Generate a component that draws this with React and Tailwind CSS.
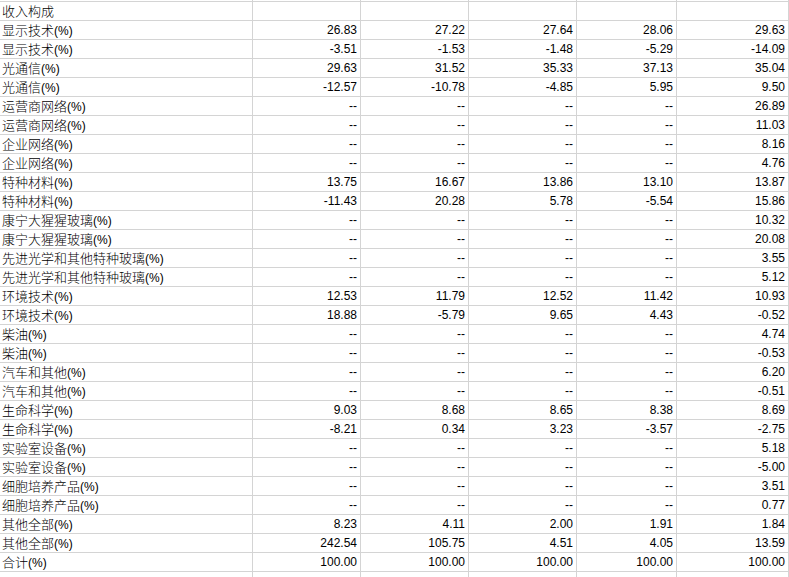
const rows = [
  ["收入构成", false, ["", "", "", "", ""]],
  ["显示技术", true, ["26.83", "27.22", "27.64", "28.06", "29.63"]],
  ["显示技术", true, ["-3.51", "-1.53", "-1.48", "-5.29", "-14.09"]],
  ["光通信", true, ["29.63", "31.52", "35.33", "37.13", "35.04"]],
  ["光通信", true, ["-12.57", "-10.78", "-4.85", "5.95", "9.50"]],
  ["运营商网络", true, ["--", "--", "--", "--", "26.89"]],
  ["运营商网络", true, ["--", "--", "--", "--", "11.03"]],
  ["企业网络", true, ["--", "--", "--", "--", "8.16"]],
  ["企业网络", true, ["--", "--", "--", "--", "4.76"]],
  ["特种材料", true, ["13.75", "16.67", "13.86", "13.10", "13.87"]],
  ["特种材料", true, ["-11.43", "20.28", "5.78", "-5.54", "15.86"]],
  ["康宁大猩猩玻璃", true, ["--", "--", "--", "--", "10.32"]],
  ["康宁大猩猩玻璃", true, ["--", "--", "--", "--", "20.08"]],
  ["先进光学和其他特种玻璃", true, ["--", "--", "--", "--", "3.55"]],
  ["先进光学和其他特种玻璃", true, ["--", "--", "--", "--", "5.12"]],
  ["环境技术", true, ["12.53", "11.79", "12.52", "11.42", "10.93"]],
  ["环境技术", true, ["18.88", "-5.79", "9.65", "4.43", "-0.52"]],
  ["柴油", true, ["--", "--", "--", "--", "4.74"]],
  ["柴油", true, ["--", "--", "--", "--", "-0.53"]],
  ["汽车和其他", true, ["--", "--", "--", "--", "6.20"]],
  ["汽车和其他", true, ["--", "--", "--", "--", "-0.51"]],
  ["生命科学", true, ["9.03", "8.68", "8.65", "8.38", "8.69"]],
  ["生命科学", true, ["-8.21", "0.34", "3.23", "-3.57", "-2.75"]],
  ["实验室设备", true, ["--", "--", "--", "--", "5.18"]],
  ["实验室设备", true, ["--", "--", "--", "--", "-5.00"]],
  ["细胞培养产品", true, ["--", "--", "--", "--", "3.51"]],
  ["细胞培养产品", true, ["--", "--", "--", "--", "0.77"]],
  ["其他全部", true, ["8.23", "4.11", "2.00", "1.91", "1.84"]],
  ["其他全部", true, ["242.54", "105.75", "4.51", "4.05", "13.59"]],
  ["合计", true, ["100.00", "100.00", "100.00", "100.00", "100.00"]],
];

const grid = "grid grid-cols-[253px_108px_108px_108px_100px_1fr]";
const latin = "font-['Liberation_Sans',Arial,sans-serif] text-[12px]";
const cjk = "font-['Noto_Sans_CJK_SC',sans-serif] text-[13px] font-light";

function EmptyRow({ h }) {
  return (
    <div className={`${grid} ${h}`}>
      {[0, 1, 2, 3, 4, 5].map((i) => (
        <div key={i} className="border-r border-[#d4d4d4]" />
      ))}
    </div>
  );
}

export default function App() {
  return (
    <div className="w-[789px] h-[577px] overflow-hidden bg-white text-black">
      <EmptyRow h="h-px" />
      <div className="border-t border-[#d4d4d4]">
        {rows.map(([name, pct, vals], r) => (
          <div key={r} className={`${grid} h-[19px] border-b border-[#d4d4d4]`}>
            <div className="border-r border-[#d4d4d4] pl-[2px] leading-[17px] whitespace-nowrap">
              <span className={cjk}>{name}</span>
              {pct && <span className={latin}>(%)</span>}
            </div>
            {vals.map((v, i) => (
              <div
                key={i}
                className={`border-r border-[#d4d4d4] pr-[3px] text-right leading-[19px] ${latin}`}
              >
                {v}
              </div>
            ))}
            <div />
          </div>
        ))}
      </div>
      <EmptyRow h="h-[10px]" />
    </div>
  );
}
